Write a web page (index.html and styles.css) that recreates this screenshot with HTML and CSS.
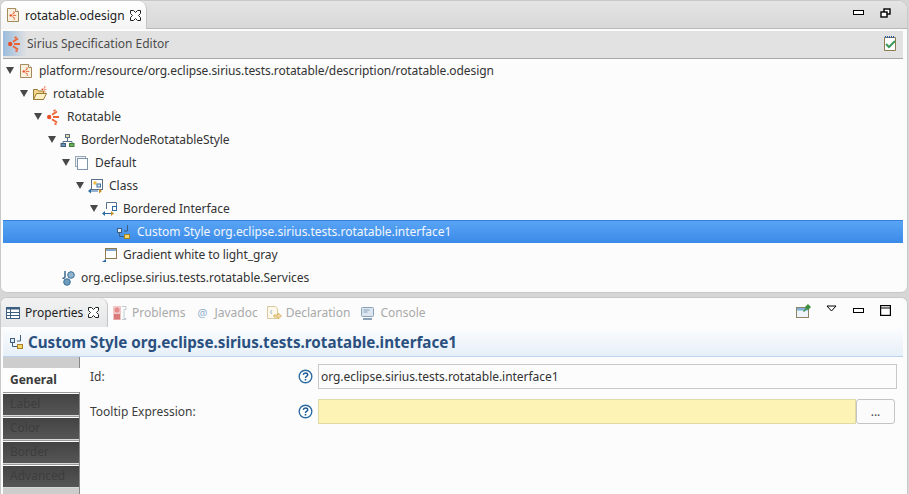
FILE: index.html
```html
<!doctype html>
<html lang="en">

<head>
  <meta charset="UTF-8">
  <title>rotatable.odesign</title>
  <link rel="stylesheet" href="styles.css">
</head>

<body>
  <svg class="defs" width="0" height="0">
    <defs>
      <g id="sirius">
        <circle cx="3.2" cy="8" r="2.2" fill="#e8502a" />
        <path d="M6 5.800 11 2.500M7 8h6M6 10.200l5 3.300M7.500 2 9.500 1M8.500 14.500l2 1" stroke="#ee6433" stroke-width="1.800" fill="none" />
      </g>
      <g id="file">
        <path d="M2.500 1.500h8l3 3v10h-11z" fill="#f8f1e0" stroke="#a58a5c" />
        <path d="M10.500 1.500v3h3" fill="#fff" stroke="#a58a5c" />
      </g>
      <g id="customstyle">
        <rect x="1.500" y="4.500" width="4" height="4" fill="#dfe9f3" stroke="#3d5f80" />
        <path d="M3.500 9v3.500H8M11.500 1v6H8" stroke="#3d5f80" fill="none" />
        <rect x="8.500" y="10.500" width="5" height="4" fill="#f5d76a" stroke="#a8802a" />
      </g>
      <g id="help">
        <circle cx="7.500" cy="7.500" r="6.300" fill="#fff" stroke="#2d6ca2" stroke-width="1.400" />
        <path d="M5.300 5.800C5.500 4.400 6.400 3.900 7.500 3.900 8.800 3.900 9.700 4.600 9.700 5.700 9.700 7.300 7.500 7.200 7.500 8.900" stroke="#1f5a92" stroke-width="1.500" fill="none" />
        <rect x="6.700" y="9.900" width="1.600" height="1.600" fill="#1f5a92" />
      </g>
      <path id="close" d="M.5.500h3l2 2 2-2h3v3l-2 2 2 2v3h-3l-2-2-2 2h-3v-3l2-2-2-2z" fill="#fff" stroke="#222" />
    </defs>
  </svg>

  <section class="panel editor">
    <div class="tabbar">
      <div class="tab active">
        <svg class="icon" width="16" height="16"><use href="#file" /><use href="#sirius" transform="translate(4 4) scale(.55)" /></svg>
        <span>rotatable.odesign</span>
        <svg class="close" width="11" height="11"><use href="#close" /></svg>
      </div>
      <div class="bar-tools">
        <span class="btn-min"></span>
        <svg width="11" height="10" fill="#fff" stroke="#000" stroke-width="1.400"><rect x="4" y="1" width="6" height="5" /><rect x="1" y="4" width="6" height="5" /></svg>
      </div>
    </div>

    <div class="editor-head">
      <div class="head-logo"><svg width="16" height="16"><use href="#sirius" /></svg></div>
      <span class="head-title">Sirius Specification Editor</span>
      <svg class="head-check" width="14" height="17">
        <path d="M1.500 2.500h11v13h-11z" fill="#fff" stroke="#8d7a4d" />
        <path d="M2 2h10" stroke="#2a5fa8" stroke-width="2" stroke-dasharray="1 1" />
        <path d="M3 9l3 3 6-6" stroke="#3d9a5a" stroke-width="2" fill="none" />
      </svg>
    </div>

    <ul class="tree">
      <li class="row" style="--depth:0"><i class="twist"></i>
        <svg class="icon" width="16" height="16"><use href="#file" /><use href="#sirius" transform="translate(4 4) scale(.55)" /></svg>
        <span class="tight">platform:/resource/org.eclipse.sirius.tests.rotatable/description/rotatable.odesign</span>
      </li>
      <li class="row" style="--depth:1"><i class="twist"></i>
        <svg class="icon" width="16" height="16">
          <path d="M1.500 13.500v-10h4l1 1.500h5v8z" fill="#f3d68c" stroke="#9a7a35" />
          <path d="M1.500 13.500l3-6h10l-3 6z" fill="#fdf0c4" stroke="#9a7a35" />
          <use href="#sirius" transform="translate(9 0) scale(.42)" />
        </svg>
        <span>rotatable</span>
      </li>
      <li class="row" style="--depth:2"><i class="twist"></i>
        <svg class="icon" width="16" height="16"><use href="#sirius" /></svg>
        <span>Rotatable</span>
      </li>
      <li class="row" style="--depth:3"><i class="twist"></i>
        <svg class="icon" width="16" height="16">
          <rect x="5.500" y="2.500" width="4" height="3" fill="#e8d9a0" stroke="#5a6f8a" />
          <path d="M7.500 6v3M3 12V9.500h9V12" stroke="#5a6f8a" fill="none" />
          <rect x="1" y="11.500" width="4.500" height="3" fill="#6f8fb0" stroke="#3d5f80" />
          <rect x="9.500" y="11.500" width="4.500" height="3" fill="#6dae5e" stroke="#3f7d3a" />
        </svg>
        <span class="tight">BorderNodeRotatableStyle</span>
      </li>
      <li class="row" style="--depth:4"><i class="twist"></i>
        <svg class="icon" width="16" height="16">
          <rect x="1.500" y="1.500" width="10" height="10" fill="#eef2f6" stroke="#9aa6b2" />
          <rect x="3.500" y="3.500" width="10" height="11" fill="#fff" stroke="#7f95ab" />
        </svg>
        <span>Default</span>
      </li>
      <li class="row" style="--depth:5"><i class="twist"></i>
        <svg class="icon" width="16" height="16">
          <rect x="3.500" y="1.500" width="11" height="10" fill="#fff" stroke="#5a6f8a" />
          <circle cx="7" cy="5" r="1.700" fill="#f0b840" />
          <rect x="9" y="6" width="3.500" height="3" fill="#dfe9f3" stroke="#3d6fa0" />
          <path d="M0 13l3-2.500v5z" fill="#2d6ca2" />
          <path d="M3 13h7" stroke="#2d6ca2" />
          <path d="M11 10.500l3 2.500-3 2.500z" fill="#c8902a" />
        </svg>
        <span>Class</span>
      </li>
      <li class="row" style="--depth:6"><i class="twist"></i>
        <svg class="icon" width="16" height="16">
          <path d="M4.500 8V1.500h10v4" fill="#fff" stroke="#5a6f8a" />
          <rect x="10.500" y="5.500" width="4" height="4" fill="#fff" stroke="#2d6ca2" />
          <path d="M0 12.500l3-2.500v5z" fill="#2d6ca2" />
          <path d="M3 12.500h6" stroke="#2d6ca2" />
          <path d="M9 10l3 2.500-3 2.500z" fill="#c8902a" />
        </svg>
        <span>Bordered Interface</span>
      </li>
      <li class="row selected" style="--depth:7"><i class="twist none"></i>
        <svg class="icon" width="16" height="16"><use href="#customstyle" /></svg>
        <span class="tight-s">Custom Style org.eclipse.sirius.tests.rotatable.interface1</span>
      </li>
      <li class="row" style="--depth:6"><i class="twist none"></i>
        <svg class="icon" width="16" height="16">
          <rect x="3.500" y="1.500" width="11" height="10" fill="#fff" stroke="#8d7a4d" />
          <rect x="4" y="2" width="10" height="2" fill="#7fa5cc" />
          <path d="M0 15l4-3v3z" fill="#2d6ca2" />
        </svg>
        <span class="tight">Gradient white to light_gray</span>
      </li>
      <li class="row" style="--depth:3"><i class="twist none"></i>
        <svg class="icon" width="16" height="16">
          <path d="M5 1v5.500C5 8 4 8.500 2.500 8" stroke="#2d5f8a" stroke-width="1.400" fill="none" />
          <circle cx="11" cy="5" r="3.300" fill="#8fb4d0" stroke="#3d6f95" />
          <circle cx="7" cy="12" r="3.300" fill="#6d9cbd" stroke="#3d6f95" />
        </svg>
        <span>org.eclipse.sirius.tests.rotatable.Services</span>
      </li>
    </ul>
  </section>

  <section class="panel props">
    <div class="tabbar light">
      <div class="tab active">
        <svg class="icon" width="16" height="16" fill="none" stroke="#3d5f80">
          <rect x="1.500" y="2.500" width="13" height="11" fill="#fff" />
          <path d="M1.500 3.500h13" stroke-width="2" />
          <path d="M1.500 7.500h13M1.500 10.500h13M5.500 4v9" />
        </svg>
        <span>Properties</span>
        <svg class="close" width="11" height="11"><use href="#close" /></svg>
      </div>
      <div class="tab off">
        <svg class="icon" width="16" height="16">
          <rect x="1" y="1" width="8" height="14" fill="#f1c6c6" />
          <circle cx="5" cy="5" r="2.500" fill="#e68a8a" />
          <rect x="2" y="9" width="6" height="5.500" fill="#d97a7a" />
          <path d="M10 1.500h4v3h-2v9h2v1h-4" fill="none" stroke="#c3c9d0" />
        </svg>
        <span>Problems</span>
      </div>
      <div class="tab off tab-javadoc">
        <span class="at">@</span>
        <span>Javadoc</span>
      </div>
      <div class="tab off">
        <svg class="icon" width="16" height="16">
          <path d="M1.500 1.500h8l2 2v10h-10z" fill="#fdf8ea" stroke="#d8c9a0" />
          <path d="M6 5 4.500 7 6 9" stroke="#9db4cb" fill="none" />
          <path d="M8 10h4V8l3.500 3-3.500 3v-2H8z" fill="#f2d9a0" stroke="#d9b76c" />
        </svg>
        <span>Declaration</span>
      </div>
      <div class="tab off tab-console">
        <svg class="icon" width="16" height="16">
          <rect x="1.500" y="2.500" width="12" height="9" rx="1" fill="#dbe6f0" stroke="#8aa2b8" />
          <path d="M3.500 5h6M3.500 7h4" stroke="#8aa2b8" />
          <path d="M3 14h9" stroke="#8aa2b8" stroke-width="2" />
        </svg>
        <span>Console</span>
      </div>
      <div class="bar-tools">
        <svg class="pin" width="16" height="16">
          <rect x="1.500" y="4.500" width="12" height="10" fill="#eef4fa" stroke="#8d8468" />
          <rect x="2" y="5" width="11" height="2.500" fill="#7fb0dc" />
          <path d="M8 8l3-3-1-1 3-3 3 3-3 3-1-1-3 3z" fill="#3d8f3f" />
        </svg>
        <svg class="menu-arrow" width="11" height="7"><path d="M1 1h9L5.500 6z" fill="#fff" stroke="#000" /></svg>
        <span class="btn-min"></span>
        <svg width="11" height="11" fill="#fff" stroke="#000" stroke-width="1.200"><rect x=".6" y=".6" width="9.800" height="9.800" /><path d="M1 3h9" /></svg>
      </div>
    </div>

    <div class="form-head">
      <svg width="16" height="16"><use href="#customstyle" /></svg>
      <span>Custom Style org.eclipse.sirius.tests.rotatable.interface1</span>
    </div>

    <div class="form-body">
      <div class="side-tabs">
        <div class="side-top"></div>
        <div class="side-tab current">General</div>
        <div class="side-tab">Label</div>
        <div class="side-tab">Color</div>
        <div class="side-tab">Border</div>
        <div class="side-tab">Advanced</div>
        <div class="side-bottom"></div>
      </div>
      <div class="fields">
        <label class="field-label">Id:</label>
        <svg width="15" height="15"><use href="#help" /></svg>
        <div class="input">org.eclipse.sirius.tests.rotatable.interface1</div>

        <label class="field-label">Tooltip Expression:</label>
        <svg width="15" height="15"><use href="#help" /></svg>
        <div class="expr">
          <div class="input yellow"></div>
          <button class="dots">...</button>
        </div>
      </div>
    </div>
  </section>
</body>

</html>
```

FILE: styles.css
```css
* {
  margin: 0;
  padding: 0;
  box-sizing: border-box;
}

html,
body {
  height: 494px;
  overflow: hidden;
}

body {
  background: #d6d6d6;
  font-family: "Noto Sans", sans-serif;
  font-size: 12px;
  color: #333;
  display: flex;
  flex-direction: column;
  gap: 4px;
}

.defs {
  position: absolute;
}

.panel {
  background: #fcfcfc;
  border: 1px solid #c8c8c8;
  border-radius: 7px 7px 0 0;
  width: 908px;
  overflow: hidden;
}

.editor {
  height: 293px;
  border-radius: 7px 10px 7px 7px;
}

.props {
  flex: 1;
  border-bottom: 0;
}

/* tabs */
.tabbar {
  height: 28px;
  display: flex;
  align-items: stretch;
  background: linear-gradient(#e4e4e4, #d8d8d8);
  border-bottom: 1px solid #b8b8b8;
}

.tabbar.light {
  height: 29px;
  background: #fcfcfc;
  border-bottom: 0;
}

.tab {
  display: flex;
  align-items: center;
  gap: 4px;
  padding: 0 3px 0 4px;
  white-space: nowrap;
  color: #222;
}

.tab.active {
  width: 146px;
  background: linear-gradient(#fff, #f4f4f4);
  border-right: 1px solid #c4c4c4;
  border-radius: 0 8px 0 0;
  margin-bottom: -1px;
}

.light .tab.active {
  width: 107px;
  background: linear-gradient(#f2f2f2, #e4e6e8);
  margin-bottom: 0;
}

.tab.off {
  color: #a9a9a9;
  padding: 0 4px;
}

.tab-javadoc {
  margin-left: 1px;
}

.tab-console {
  margin-left: 2px;
}

.at {
  width: 16px;
  text-align: center;
  color: #8fb0cc;
  font-size: 11px;
}

.close {
  margin-left: 1px;
}

.bar-tools {
  margin-left: auto;
  display: flex;
  align-items: center;
  gap: 16px;
  padding-right: 16px;
  padding-bottom: 4px;
}

.btn-min {
  width: 11px;
  height: 5px;
  background: #fff;
  border: 1px solid #000;
}

.pin {
  margin-right: -1px;
}

.menu-arrow {
  margin-top: -4px;
}

/* editor header */
.editor-head {
  margin: 2px 4px 0 2px;
  height: 28px;
  display: flex;
  align-items: center;
  padding-bottom: 2px;
  background: #e2e2e2;
  border-bottom: 1px solid #a8a8a8;
  color: #4c4c4c;
}

.head-logo {
  width: 24px;
  height: 100%;
  display: flex;
  align-items: center;
  padding-left: 4px;
  background: linear-gradient(90deg, #9bbbdc, #e2e2e2);
}

.head-check {
  margin-left: auto;
  margin-right: 6px;
}

/* tree */
.tree {
  list-style: none;
  margin: 0 4px 0 2px;
}

.row {
  height: 23px;
  display: flex;
  align-items: center;
  padding-left: calc(2px + var(--depth) * 14px);
  white-space: nowrap;
}

.row .icon {
  margin-right: 5px;
  flex: none;
}

.tight {
  letter-spacing: -.08px;
}

.tight-s {
  letter-spacing: -.03px;
}

.twist {
  width: 13px;
  height: 7px;
  flex: none;
  position: relative;
}

.twist::before {
  content: "";
  position: absolute;
  left: 1px;
  top: 0;
  border-left: 4.5px solid transparent;
  border-right: 4.5px solid transparent;
  border-top: 7px solid #484848;
}

.twist.none::before {
  display: none;
}

.selected {
  background: linear-gradient(#5aa5f5, #3a8ae8);
  box-shadow: inset 0 1px #2f80e0;
  color: #f2f7fd;
}

/* form */
.form-head {
  margin: 0 4px 0 2px;
  height: 30px;
  display: flex;
  align-items: center;
  gap: 3px;
  padding: 1px 0 0 6px;
  background: linear-gradient(#fcfdfe, #e6eff8);
  border-bottom: 1px solid #bcd4ee;
  font-size: 15.2px;
  font-weight: 700;
  color: #2a5080;
}

.form-body {
  display: flex;
  margin-left: 2px;
}

.side-tabs {
  width: 77px;
  border-right: 1px solid #888;
  flex: none;
  height: 140px;
}

.side-top {
  height: 11px;
  background: #cdcdcd;
}

.side-bottom {
  height: 10px;
  background: #cdcdcd;
}

.side-tab {
  height: 24px;
  padding-left: 7px;
  line-height: 22px;
  color: #3d3d3d;
  background: linear-gradient(#434343, #565656) 0 1px / 100% 21px no-repeat #fff;
  border-top: 1px solid #999;
  border-bottom: 1px solid #d8d8d8;
}

.side-tab.current {
  background: #fdfdfd;
  color: #3a3a3a;
  font-weight: 700;
  margin-right: -1px;
  border: 0;
  line-height: 24px;
}

.fields {
  flex: 1;
  display: grid;
  grid-template-columns: 208px 20px 1fr;
  grid-template-rows: 25px 25px;
  row-gap: 10px;
  align-items: center;
  padding: 7px 10px 0 10px;
}

.field-label {
  color: #3c3c3c;
}

.input {
  height: 25px;
  padding-left: 2px;
  line-height: 23px;
  letter-spacing: -.04px;
  background: #fcfcfc;
  border: 1px solid #c8c8c8;
  color: #333;
}

.yellow {
  flex: 1;
  background: #fdf3b5;
  border-color: #e0d9a8;
}

.expr {
  display: flex;
  padding-right: 2px;
}

.dots {
  width: 39px;
  height: 25px;
  background: #fbfbfb;
  border: 1px solid #c4c4c4;
  border-radius: 3px;
  font-family: "Noto Sans", sans-serif;
  font-size: 12px;
  color: #444;
}
```
